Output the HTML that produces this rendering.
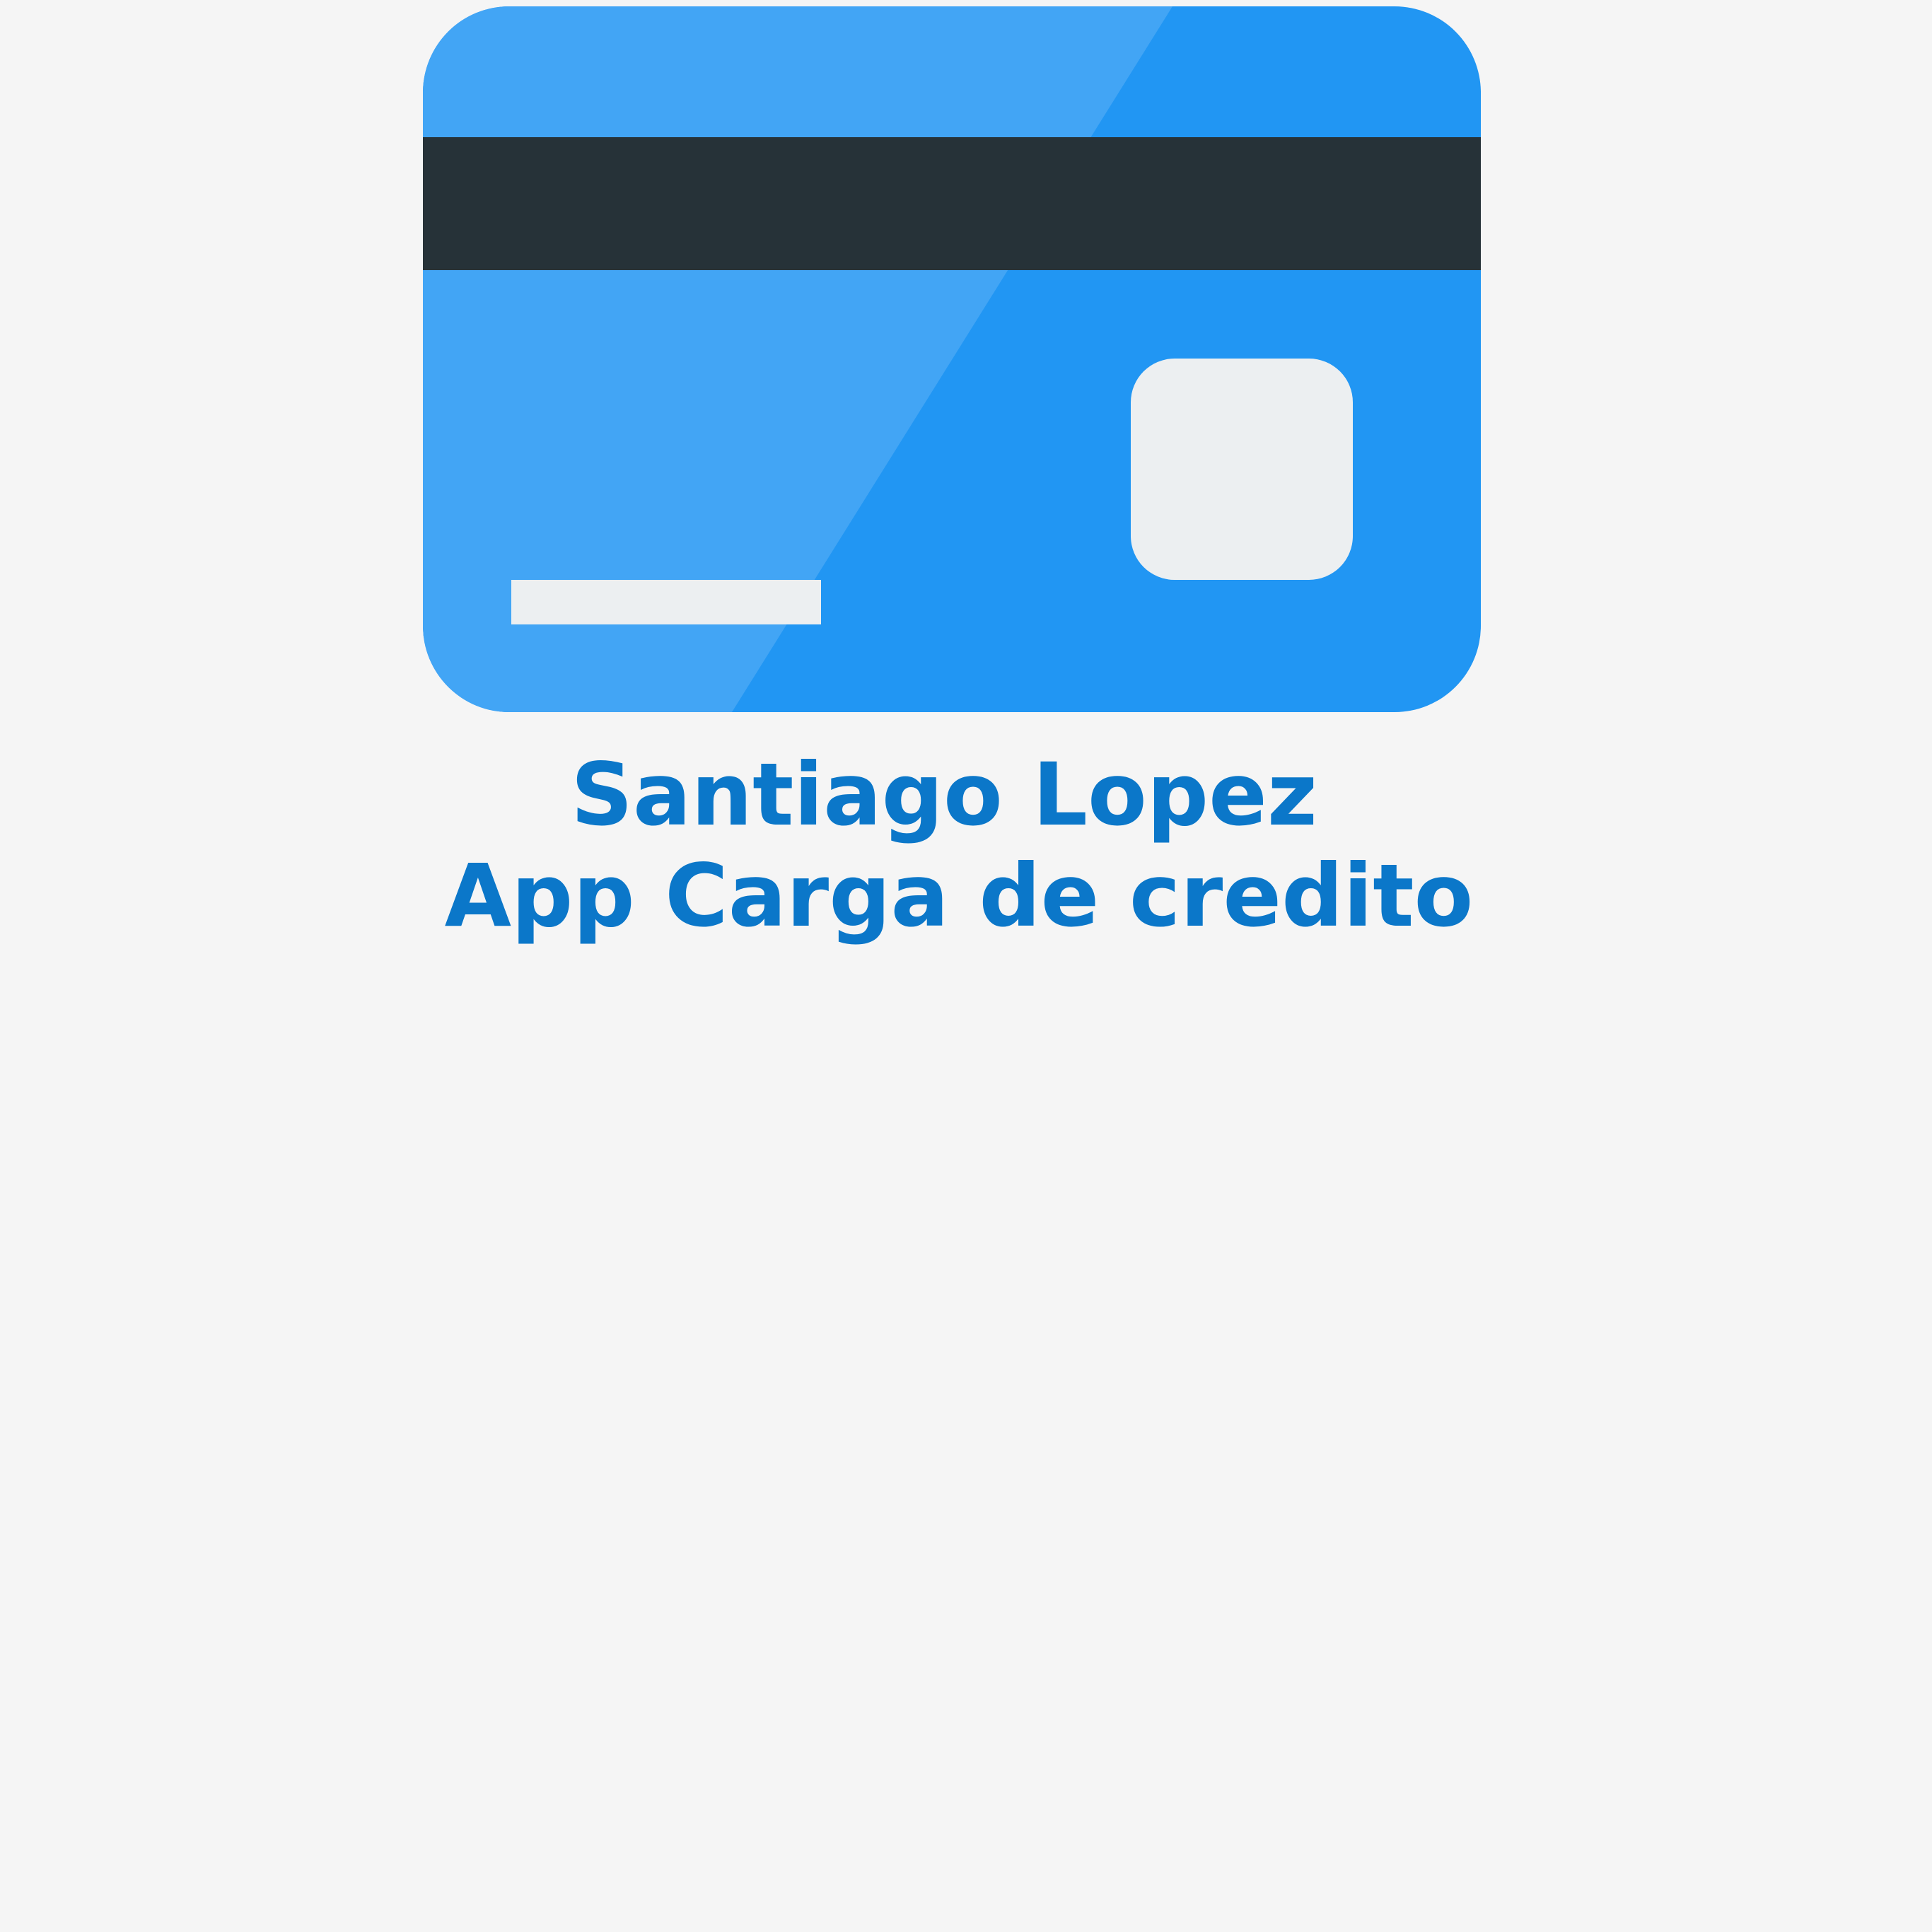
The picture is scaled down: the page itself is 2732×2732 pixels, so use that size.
<!DOCTYPE html>
<html><head><meta charset="utf-8"><style>
html,body{margin:0;padding:0;background:#f5f5f5;}
body{width:2732px;height:2732px;position:relative;overflow:hidden;font-family:"DejaVu Sans","Liberation Sans",sans-serif;}
.t{position:absolute;left:0;width:2732px;text-align:center;color:#0b77c9;font-weight:bold;font-size:122px;line-height:1;white-space:nowrap;}
</style></head><body>
<svg width="2732" height="1020" style="position:absolute;left:0;top:0">
<defs><clipPath id="c"><rect x="598" y="9" width="1496" height="998" rx="122"/></clipPath></defs>
<g clip-path="url(#c)">
<rect x="598" y="9" width="1496" height="998" fill="#2196f3"/>
<polygon points="598,9 1658,9 1035,1007 598,1007" fill="#42a5f5"/>
<rect x="598" y="194" width="1496" height="188" fill="#263238"/>
</g>
<rect x="1599" y="507" width="314" height="313" rx="62" fill="#eceff1"/>
<rect x="723" y="820" width="438" height="63" fill="#eceff1"/>
</svg>
<div class="t" style="top:1063px;left:-31px">Santiago Lopez</div>
<div class="t" style="top:1206px;left:-10px">App Carga de credito</div>
</body></html>
